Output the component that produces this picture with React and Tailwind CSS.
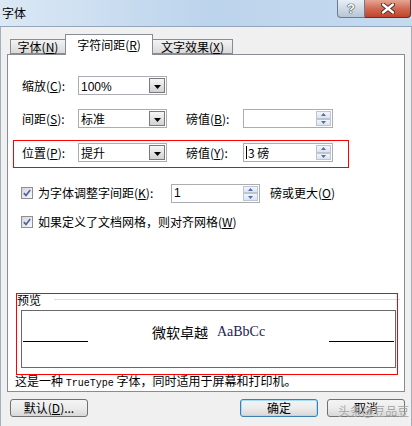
function Tri() {
  return (
    <svg width="7" height="4" viewBox="0 0 7 4"><path d="M0 0h7L3.5 4z" fill="#000" /></svg>
  );
}

function Combo({ value }) {
  return (
    <div className="w-[89px] h-[19px] border border-[#abadb3] bg-white flex items-stretch">
      <div className="flex-1 pl-[2px] leading-[17px] text-[12px]">{value}</div>
      <div className="w-[16px] my-px mr-px border border-[#7a7a7a] bg-gradient-to-b from-[#f6f6f6] to-[#d2d2d2] flex items-center justify-center pt-[2px]">
        <Tri />
      </div>
    </div>
  );
}

function SpinHalf({ up }) {
  return (
    <div className="flex-1 border border-[#bcc5d0] bg-gradient-to-b from-[#f2f5fa] to-[#dde4ee] flex items-center justify-center">
      <svg width="5" height="3" viewBox="0 0 5 3">
        {up ? <path d="M0 3h5L2.5 0z" fill="#4c6db5" /> : <path d="M0 0h5L2.5 3z" fill="#4c6db5" />}
      </svg>
    </div>
  );
}

function Spin({ children, wide }) {
  return (
    <div className={wide ? "w-[90px] h-[19px] border border-[#abadb3] bg-white flex items-stretch" : "w-[89px] h-[19px] border border-[#abadb3] bg-white flex items-stretch"}>
      <div className="flex-1 pl-[2px] leading-[17px] text-[12px] flex items-center">{children}</div>
      <div className="w-[15px] my-px mr-px flex flex-col">
        <SpinHalf up />
        <SpinHalf />
      </div>
    </div>
  );
}

function Check() {
  return (
    <div className="w-[12px] h-[12px] border border-[#8e8f8f] bg-gradient-to-br from-[#d6d6d6] to-[#fafafa] flex items-center justify-center">
      <svg width="8" height="8" viewBox="0 0 8 8">
        <path d="M0.8 4.2 L3 6.4 L7.2 1" fill="none" stroke="#4a64a8" strokeWidth="1.7" />
      </svg>
    </div>
  );
}

function Btn({ children, primary }) {
  return (
    <div
      className={
        primary
          ? "w-[78px] h-[18px] rounded-[3px] border border-[#3c7fb1] shadow-[inset_0_0_0_1px_#a8dcf5] bg-gradient-to-b from-[#f4f4f4] via-[#ececec] to-[#d8d8d8] flex items-center justify-center leading-none"
          : "w-[78px] h-[18px] rounded-[3px] border border-[#707070] bg-gradient-to-b from-[#f4f4f4] via-[#ececec] to-[#d8d8d8] flex items-center justify-center leading-none"
      }
    >
      {children}
    </div>
  );
}

export default function App() {
  return (
    <div className="relative w-[412px] h-[426px] overflow-hidden bg-[#f0f0f0] text-[12px] text-black font-['Noto_Sans_CJK_SC',sans-serif]">
      {/* Title bar */}
      <div className="h-[27px] flex items-start bg-gradient-to-r from-[#dbe8f5] via-[#bcd4ec] to-[#c5daef] border-b border-[#93a6ba]">
        <div className="pl-[2px] pt-[5px] leading-[16px]">字体</div>
        <div className="ml-auto mr-px flex">
          <div className="w-[28px] h-[18px] rounded-bl-[4px] border border-t-0 border-[#6c7c8e] bg-gradient-to-b from-[#e9eff6] to-[#b5c5d6] flex items-center justify-center">
            <span className="text-white font-bold text-[13px] leading-none [text-shadow:0_0_1px_#333,0_0_1px_#333,0_0_1px_#333] font-['Liberation_Sans',sans-serif]">?</span>
          </div>
          <div className="w-[46px] h-[18px] rounded-br-[4px] border border-l-0 border-t-0 border-[#6d2a1e] bg-gradient-to-b from-[#e7a593] via-[#d06a52] to-[#c0432a] flex items-center justify-center">
            <svg width="14" height="11" viewBox="0 0 14 11">
              <path d="M2 1.5 L12 9.5 M12 1.5 L2 9.5" stroke="#4a2a24" strokeWidth="4.2" strokeLinecap="round" />
              <path d="M2 1.5 L12 9.5 M12 1.5 L2 9.5" stroke="#fff" strokeWidth="2.4" strokeLinecap="round" />
            </svg>
          </div>
        </div>
      </div>

      {/* Body */}
      <div className="h-[399px] border-l border-r border-[#a3afbb] flex flex-col">
        {/* Tabs */}
        <div className="pt-[7px] ml-[9px] flex items-end h-[27px]">
          <div className="w-[55px] h-[15px] border border-r-0 border-[#898c95] bg-gradient-to-b from-[#f3f3f3] to-[#d9d9d9] flex items-center justify-center leading-none">
            字体(<u>N</u>)
          </div>
          <div className="relative z-10 -mb-px w-[88px] h-[21px] border border-b-0 border-[#898c95] bg-white flex items-center justify-center leading-none pb-[1px]">
            字符间距(<u>R</u>)
          </div>
          <div className="w-[80px] h-[15px] border border-l-0 border-[#898c95] bg-gradient-to-b from-[#f3f3f3] to-[#d9d9d9] flex items-center justify-center leading-none">
            文字效果(<u>X</u>)
          </div>
        </div>

        {/* Panel */}
        <div className="ml-[6px] w-[398px] h-[338px] border border-[#898c95] bg-white flex flex-col">
          <div className="mt-[21px] pl-[14px] h-[19px] flex items-center">
            <div className="w-[56px]">缩放(<u>C</u>):</div>
            <Combo value={<span className="font-['Liberation_Sans',sans-serif]">100%</span>} />
          </div>
          <div className="mt-[14px] pl-[14px] h-[19px] flex items-center">
            <div className="w-[56px]">间距(<u>S</u>):</div>
            <Combo value="标准" />
            <div className="ml-[19px] w-[57px]">磅值(<u>B</u>):</div>
            <Spin wide />
          </div>
          <div className="mt-[12px] ml-[5px] w-[336px] h-[28px] border border-[#ff0000] pl-[8px] pt-[2px]">
            <div className="h-[19px] flex items-center">
              <div className="w-[56px]">位置(<u>P</u>):</div>
              <Combo value="提升" />
              <div className="ml-[19px] w-[57px]">磅值(<u>Y</u>):</div>
              <Spin wide>
                <span className="w-px h-[13px] bg-black mr-[1px]" />
                <span>3 磅</span>
              </Spin>
            </div>
          </div>

          <div className="mt-[16px] pl-[13px] h-[19px] flex items-center">
            <Check />
            <div className="ml-[5px] w-[133px]">为字体调整字间距(<u>K</u>):</div>
            <Spin>
              <span className="font-['Liberation_Sans',sans-serif]">1</span>
            </Spin>
            <div className="ml-[10px]">磅或更大(<u>O</u>)</div>
          </div>
          <div className="mt-[10px] pl-[13px] h-[19px] flex items-center">
            <Check />
            <div className="ml-[5px]">如果定义了文档网格，则对齐网格(<u>W</u>)</div>
          </div>

          <div className="mt-[61px] pl-[9px] h-[14px] flex items-center">
            <div className="w-[37px] leading-none">预览</div>
            <div className="flex-1 h-px bg-[#d5dfe6] mr-[4px]" />
          </div>
          <div className="mt-[4px] ml-[13px] w-[375px] h-[58px] border border-[#696969] flex flex-col pt-[11px]">
            <div className="h-[20px] flex items-end">
              <div className="ml-px w-[65px] h-px bg-black" />
              <div className="flex-1 h-[20px] flex items-center justify-center gap-[9px]">
                <span className="text-[14px] leading-none">微软卓越</span>
                <span className="text-[14px] leading-none text-[#1c1c50] font-['Liberation_Serif',serif]">AaBbCc</span>
              </div>
              <div className="mr-px w-[65px] h-px bg-black" />
            </div>
          </div>
          <div className="mt-[6px] pl-[7px] leading-[14px]">
            这是一种 <span className="font-['Liberation_Mono',monospace] text-[10px]">TrueType</span> 字体，同时适用于屏幕和打印机。
          </div>
        </div>

        {/* Buttons */}
        <div className="mt-[7px] flex h-[18px]">
          <div className="ml-[9px]">
            <Btn>默认(<u>D</u>)...</Btn>
          </div>
          <div className="ml-auto flex gap-[9px] mr-[6px]">
            <Btn primary>确定</Btn>
            <Btn>取消</Btn>
          </div>
        </div>
      </div>

      {/* Annotation overlay: preview red box */}
      <div className="absolute left-[16px] top-[293px] w-[382px] h-[82px] border border-[#ff0000] pointer-events-none" />

      {/* Watermark */}
      <div className="absolute left-[338px] top-[404px] text-[12px] leading-[14px] text-[#9a9a9a] opacity-90 [text-shadow:0_0_1px_#fff]">
        头条@豆品豆
      </div>
    </div>
  );
}
